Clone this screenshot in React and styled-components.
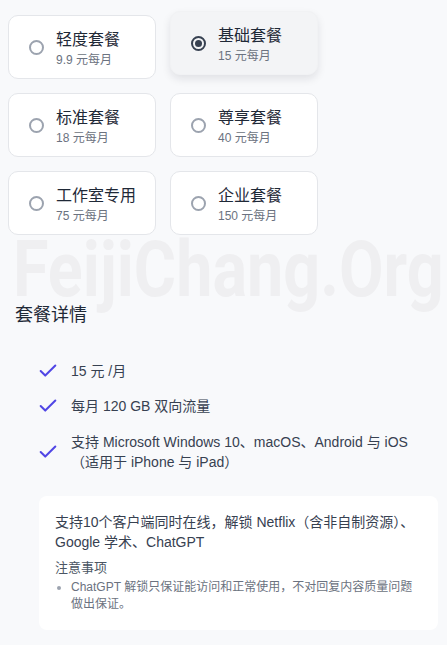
import React, { useState } from "react"
import styled, { createGlobalStyle } from "styled-components"
import { Check } from "lucide-react"

const GlobalStyle = createGlobalStyle`
  html, body {
    margin: 0;
    padding: 0;
    background: #f8f9fb;
  }
  body {
    font-family: "Liberation Sans", "Noto Sans CJK SC", sans-serif;
    color: #1f2937;
  }
`

const plans = [
  { id: "lite", name: "轻度套餐", price: "9.9 元每月" },
  { id: "basic", name: "基础套餐", price: "15 元每月" },
  { id: "standard", name: "标准套餐", price: "18 元每月" },
  { id: "premium", name: "尊享套餐", price: "40 元每月" },
  { id: "studio", name: "工作室专用", price: "75 元每月" },
  { id: "business", name: "企业套餐", price: "150 元每月" },
]

const features = [
  "15 元 /月",
  "每月 120 GB 双向流量",
  "支持 Microsoft Windows 10、macOS、Android 与 iOS（适用于 iPhone 与 iPad）",
]

const App = () => {
  const [selected, setSelected] = useState("basic")

  return (
    <Page>
      <GlobalStyle />
      <Watermark aria-hidden="true">FeijiChang.Org</Watermark>

      <PlanGrid>
        {plans.map((plan) => (
          <PlanCard
            key={plan.id}
            $active={selected === plan.id}
            onClick={() => setSelected(plan.id)}
          >
            <Radio $active={selected === plan.id} />
            <PlanText>
              <PlanName>{plan.name}</PlanName>
              <PlanPrice>{plan.price}</PlanPrice>
            </PlanText>
          </PlanCard>
        ))}
      </PlanGrid>

      <Heading>套餐详情</Heading>

      <FeatureList>
        {features.map((text) => (
          <Feature key={text}>
            <CheckIcon>
              <Check size={22} strokeWidth={2.2} />
            </CheckIcon>
            <span>{text}</span>
          </Feature>
        ))}
      </FeatureList>

      <NoteCard>
        <NoteMain>
          支持10个客户端同时在线，解锁 Netflix（含非自制资源）、Google 学术、ChatGPT
        </NoteMain>
        <NoteTitle>注意事项</NoteTitle>
        <NoteList>
          <li>ChatGPT 解锁只保证能访问和正常使用，不对回复内容质量问题做出保证。</li>
        </NoteList>
      </NoteCard>
    </Page>
  )
}

const Page = styled.div`
  position: relative;
  min-height: 645px;
  padding: 15px 9px 18px 8px;
  box-sizing: border-box;
`

/* watermark sits behind the content, so it is laid over the page */
const Watermark = styled.div`
  position: absolute;
  top: 240px;
  left: 13px;
  font-family: Roboto, "Liberation Sans", sans-serif;
  font-weight: 700;
  font-size: 77px;
  line-height: 60px;
  color: #efeff1;
  white-space: nowrap;
  transform: scaleX(0.84);
  transform-origin: left top;
  pointer-events: none;
  user-select: none;
`

const PlanGrid = styled.div`
  position: relative;
  display: grid;
  grid-template-columns: 148px 148px;
  column-gap: 14px;
  row-gap: 14px;
`

const PlanCard = styled.div`
  height: 64px;
  box-sizing: border-box;
  display: flex;
  align-items: center;
  gap: 12px;
  padding-left: 20px;
  background: ${(p) => (p.$active ? "#f3f4f6" : "#ffffff")};
  border: 1px solid ${(p) => (p.$active ? "#f1f2f4" : "#e4e6ea")};
  border-radius: 10px;
  box-shadow: ${(p) =>
    p.$active ? "0 4px 8px rgba(17, 24, 39, 0.1)" : "none"};
  transform: ${(p) => (p.$active ? "translateY(-4px)" : "none")};
  cursor: pointer;
`

const Radio = styled.span`
  flex: none;
  width: 15px;
  height: 15px;
  box-sizing: border-box;
  border-radius: 50%;
  border: 2px solid ${(p) => (p.$active ? "#374151" : "#9ca3af")};
  display: flex;
  align-items: center;
  justify-content: center;

  &::after {
    content: "";
    display: ${(p) => (p.$active ? "block" : "none")};
    width: 7px;
    height: 7px;
    border-radius: 50%;
    background: #374151;
  }
`

const PlanText = styled.div`
  display: flex;
  flex-direction: column;
  padding-top: 3px;
`

const PlanName = styled.span`
  font-size: 16px;
  line-height: 20px;
  color: #1f2937;
`

const PlanPrice = styled.span`
  font-size: 12px;
  line-height: 16px;
  margin-top: 2px;
  color: #6b7280;
`

const Heading = styled.h2`
  position: relative;
  margin: 67px 0 0 7px;
  font-size: 18px;
  line-height: 26px;
  font-weight: 400;
  color: #1f2937;
`

const FeatureList = styled.ul`
  position: relative;
  list-style: none;
  margin: 33px 0 0;
  padding: 0 0 0 29px;
  display: flex;
  flex-direction: column;
  gap: 15px;
`

const Feature = styled.li`
  display: flex;
  align-items: center;
  gap: 12px;
  font-size: 14px;
  line-height: 20px;
  color: #374151;
  padding-right: 20px;

  &:last-child {
    margin-top: 1px;
  }
`

const CheckIcon = styled.span`
  flex: none;
  height: 20px;
  display: flex;
  align-items: center;
  color: #5046e5;

  svg {
    overflow: visible;
  }
`

const NoteCard = styled.div`
  position: relative;
  margin: 24px 0 0 31px;
  padding: 16px 16px 17px;
  background: #ffffff;
  border-radius: 8px;
`

const NoteMain = styled.p`
  margin: 0;
  font-size: 14px;
  line-height: 20px;
  color: #374151;
`

const NoteTitle = styled.p`
  margin: 7px 0 0;
  font-size: 13px;
  line-height: 18px;
  color: #4b5563;
`

const NoteList = styled.ul`
  margin: 2px 0 0;
  padding-left: 16px;
  font-size: 12px;
  line-height: 17px;
  color: #6b7280;

  li::marker {
    color: #9ca3af;
  }
`

export default App
